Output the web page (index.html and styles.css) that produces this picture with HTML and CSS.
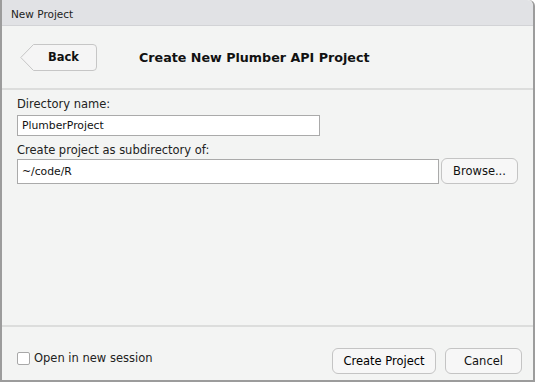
FILE: index.html
```html
<!DOCTYPE html>
<html lang="en">

<head>
    <meta charset="UTF-8">
    <title>New Project</title>
    <link rel="stylesheet" href="styles.css">
</head>

<body>

    <div class="window">
        <!-- Barra de titulo -->
        <div class="titlebar">New Project</div>

        <!-- Cabecera con boton de volver -->
        <div class="header">
            <button class="back" type="button">
                <svg class="back-shape" width="77" height="27" viewBox="0 0 77 27">
                    <path d="M13.5 0.5 H73 Q76.5 0.5 76.5 4 V23 Q76.5 26.5 73 26.5 H13.5 L0.8 13.5 Z" fill="#f5f5f5" stroke="#c6c6c6" stroke-width="1"/>
                </svg>
                <span>Back</span>
            </button>
            <h1>Create New Plumber API Project</h1>
        </div>

        <!-- Formulario -->
        <div class="content">
            <label class="field-label">Directory name:</label>
            <input class="text-input short" type="text" value="PlumberProject">

            <label class="field-label second">Create project as subdirectory of:</label>
            <div class="dir-row">
                <input class="text-input" type="text" value="~/code/R">
                <button class="btn browse" type="button">Browse...</button>
            </div>
        </div>

        <!-- Pie -->
        <div class="footer">
            <label class="check">
                <span class="box"></span>
                Open in new session
            </label>
            <div class="actions">
                <button class="btn create" type="button">Create Project</button>
                <button class="btn cancel" type="button">Cancel</button>
            </div>
        </div>
    </div>

</body>

</html>
```

FILE: styles.css
```css
body {
    margin: 0;
    padding: 0;
    font-family: "DejaVu Sans", "Liberation Sans", sans-serif;
    color: #111;
    background-color: #ffffff;
}

.window {
    width: 531px;
    height: 380px;
    display: flex;
    flex-direction: column;
    background-color: #f3f4f3;
    border-left: 2px solid #9c9c9c;
    border-right: 2px solid #9c9c9c;
    border-bottom: 2px solid #9c9c9c;
    border-top-right-radius: 6px;
}

.titlebar {
    height: 25px;
    line-height: 28px;
    padding-left: 9px;
    font-size: 10.5px;
    color: #222;
    background-color: #e1e2e5;
    border-bottom: 1px solid #d2d3d6;
    border-top-right-radius: 6px;
}

.header {
    height: 62px;
    display: flex;
    align-items: center;
    border-bottom: 2px solid #dcdddc;
}

.back {
    position: relative;
    width: 77px;
    height: 27px;
    margin-left: 18px;
    padding: 0 0 0 10px;
    border: none;
    background: none;
    font-family: inherit;
    font-size: 11.5px;
    font-weight: bold;
    color: #111;
}

.back-shape {
    position: absolute;
    left: 0;
    top: 0;
}

.back span {
    position: relative;
}

h1 {
    margin: 0 0 0 42px;
    font-size: 12.7px;
    font-weight: bold;
    color: #111;
}

.content {
    flex: 1;
    padding: 6px 0 0 15px;
    display: flex;
    flex-direction: column;
    align-items: flex-start;
    border-bottom: 2px solid #dcdddc;
}

.field-label {
    font-size: 11.5px;
    line-height: 16px;
    color: #222;
    margin-bottom: 3px;
}

.field-label.second {
    margin-bottom: 0;
}

.text-input {
    box-sizing: border-box;
    height: 21px;
    padding: 0 4px;
    border: 1px solid #aaaaaa;
    background-color: #ffffff;
    font-family: inherit;
    font-size: 10.8px;
    color: #111;
    outline: none;
}

.text-input.short {
    width: 303px;
    margin-bottom: 6px;
}

.dir-row {
    display: flex;
    align-items: center;
    gap: 2px;
}

.dir-row .text-input {
    width: 422px;
    height: 25px;
}

.btn {
    box-sizing: border-box;
    height: 26px;
    border: 1px solid #c4c4c4;
    border-radius: 6px;
    background-color: #f7f7f7;
    font-family: inherit;
    font-size: 11.5px;
    color: #111;
    padding: 0;
}

.browse {
    width: 77px;
}

.footer {
    height: 53px;
    box-sizing: border-box;
    display: flex;
    align-items: flex-end;
    justify-content: space-between;
    padding: 0 11px 6px 15px;
}

.check {
    display: flex;
    align-items: center;
    gap: 4px;
    margin-bottom: 9px;
    font-size: 11.5px;
    color: #222;
}

.box {
    width: 11px;
    height: 11px;
    border: 1px solid #a8a8a8;
    border-radius: 2px;
    background-color: #ffffff;
}

.actions {
    display: flex;
    gap: 9px;
}

.create {
    width: 104px;
    color: #000;
}

.cancel {
    width: 77px;
}
```
